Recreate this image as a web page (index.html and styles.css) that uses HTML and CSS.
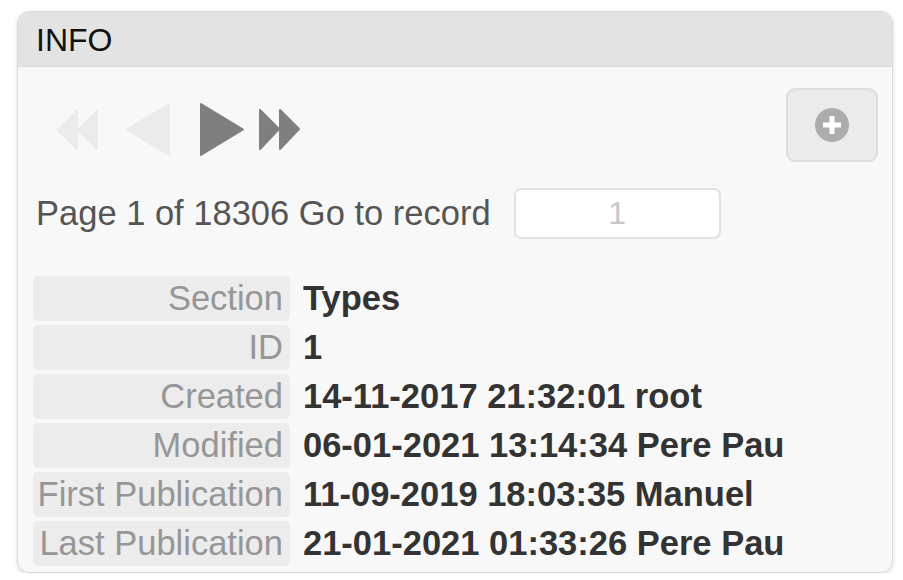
FILE: index.html
```html
<!DOCTYPE html>
<html lang="en">
<head>
    <meta charset="UTF-8">
    <meta name="viewport" content="width=device-width, initial-scale=1.0">
    <title>Info</title>
    <link rel="stylesheet" href="styles.css">
</head>
<body>

    <div class="panel">
        <div class="panel-head">INFO</div>
        <div class="panel-body">

            <div class="nav-row">
                <div class="nav-btns">
                    <button class="nav-btn first" title="First">
                        <svg width="44" height="44" viewBox="0 0 44 44">
                            <path d="M2 22 L21 3 L21 41 Z M22 22 L41 3 L41 41 Z" />
                        </svg>
                    </button>
                    <button class="nav-btn prev" title="Previous">
                        <svg width="46" height="55" viewBox="0 0 46 55">
                            <path d="M2 27.5 L44 2 L44 53 Z" />
                        </svg>
                    </button>
                    <button class="nav-btn next" title="Next">
                        <svg width="46" height="55" viewBox="0 0 46 55">
                            <path d="M2 2 L44 27.5 L2 53 Z" />
                        </svg>
                    </button>
                    <button class="nav-btn last" title="Last">
                        <svg width="44" height="44" viewBox="0 0 44 44">
                            <path d="M2 2 L21 21 L2 41 Z M22 2 L41 21 L22 41 Z" />
                        </svg>
                    </button>
                </div>
                <button class="add-btn" title="New">
                    <svg width="36" height="36" viewBox="0 0 36 36">
                        <circle cx="18" cy="18" r="17" fill="#acacac" />
                        <rect x="15.5" y="9" width="5" height="18" fill="#fff" />
                        <rect x="9" y="15.5" width="18" height="5" fill="#fff" />
                    </svg>
                </button>
            </div>

            <div class="pager">
                <span>Page 1 of 18306 Go to record</span>
                <input type="text" class="goto" value="1">
            </div>

            <div class="info-grid">
                <div class="lbl">Section</div><div class="val">Types</div>
                <div class="lbl">ID</div><div class="val">1</div>
                <div class="lbl">Created</div><div class="val">14-11-2017 21:32:01 root</div>
                <div class="lbl">Modified</div><div class="val">06-01-2021 13:14:34 Pere Pau</div>
                <div class="lbl">First Publication</div><div class="val">11-09-2019 18:03:35 Manuel</div>
                <div class="lbl">Last Publication</div><div class="val">21-01-2021 01:33:26 Pere Pau</div>
            </div>

        </div>
    </div>

</body>
</html>
```

FILE: styles.css
```css
body {
    margin: 0;
    background-color: #fff;
    font-family: "Liberation Sans", Arial, sans-serif;
    color: #333;
}
.panel {
    width: 874px;
    margin: 11px 0 0 17px;
    border: 1px solid #d9d9d9;
    border-radius: 12px;
    background-color: #f8f8f8;
    box-shadow: 0 2px 5px rgba(0, 0, 0, 0.12);
    overflow: hidden;
}
.panel-head {
    height: 54px;
    line-height: 56px;
    padding-left: 18px;
    font-size: 32px;
    color: #111;
    background-color: #e3e3e3;
    border-bottom: 1px solid #dcdcdc;
}
.panel-body {
    padding: 21px 14px 6px 15px;
}
.nav-row {
    display: flex;
    justify-content: space-between;
    align-items: flex-start;
}
.nav-btns {
    display: flex;
    align-items: center;
    padding: 14px 0 0 23px;
    gap: 25px;
}
.nav-btn {
    padding: 0;
    border: none;
    background: none;
    display: block;
}
.nav-btn svg {
    display: block;
}
.nav-btn path {
    stroke-width: 2;
    stroke-linejoin: round;
}
.first path, .prev path {
    fill: #ebebeb;
    stroke: #ebebeb;
}
.next path, .last path {
    fill: #7f7f7f;
    stroke: #7f7f7f;
}
.nav-btn.next {
    margin-left: 3px;
}
.nav-btn.last {
    margin-left: -12px;
}
.add-btn {
    width: 92px;
    height: 74px;
    border: 2px solid #dedede;
    border-radius: 9px;
    background-color: #ebebeb;
    display: flex;
    align-items: center;
    justify-content: center;
    padding: 0;
}
.add-btn svg {
    display: block;
}
.pager {
    display: flex;
    align-items: center;
    margin-top: 26px;
    padding-left: 3px;
    font-size: 34.5px;
    color: #555;
}
.goto {
    width: 207px;
    height: 51px;
    box-sizing: border-box;
    margin-left: 23px;
    border: 2px solid #e1e1e1;
    border-radius: 7px;
    background-color: #fff;
    font-family: inherit;
    font-size: 32px;
    color: #c8c8c8;
    text-align: center;
}
.info-grid {
    display: grid;
    grid-template-columns: 257px 1fr;
    row-gap: 4px;
    column-gap: 4px;
    margin-top: 37px;
    font-size: 34.5px;
    line-height: 45px;
}
.lbl {
    background-color: #ececec;
    border-radius: 5px;
    text-align: right;
    padding-right: 7px;
    color: #969696;
    white-space: nowrap;
}
.val {
    padding-left: 9px;
    font-weight: bold;
    color: #333;
    white-space: nowrap;
}
```
